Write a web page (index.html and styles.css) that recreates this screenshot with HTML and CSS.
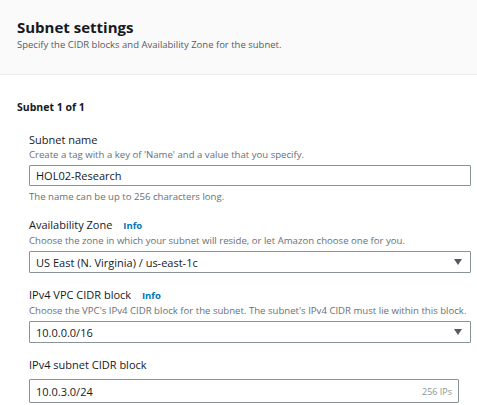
FILE: index.html
```html
<!DOCTYPE html>
<html>
<head>
<meta charset="utf-8">
<link rel="stylesheet" href="styles.css">
</head>
<body>
<div class="panel">
  <div class="header">
    <h2 class="title">Subnet settings</h2>
    <p class="subtitle">Specify the CIDR blocks and Availability Zone for the subnet.</p>
  </div>
  <div class="body">
    <h3 class="subnet-title">Subnet 1 of 1</h3>
    <div class="fields">
      <div class="field">
        <div class="label">Subnet name</div>
        <div class="desc">Create a tag with a key of 'Name' and a value that you specify.</div>
        <div class="input">HOL02-Research</div>
        <div class="hint">The name can be up to 256 characters long.</div>
      </div>
      <div class="field">
        <div class="label">Availability Zone <span class="info">Info</span></div>
        <div class="desc">Choose the zone in which your subnet will reside, or let Amazon choose one for you.</div>
        <div class="input select">US East (N. Virginia) / us-east-1c<span class="caret"></span></div>
      </div>
      <div class="field">
        <div class="label">IPv4 VPC CIDR block <span class="info">Info</span></div>
        <div class="desc">Choose the VPC's IPv4 CIDR block for the subnet. The subnet's IPv4 CIDR must lie within this block.</div>
        <div class="input select">10.0.0.0/16<span class="caret"></span></div>
      </div>
      <div class="field">
        <div class="label">IPv4 subnet CIDR block</div>
        <div class="input short">10.0.3.0/24<span class="ips">256 IPs</span></div>
        <div class="below"></div>
      </div>
    </div>
  </div>
</div>
</body>
</html>
```
FILE: styles.css
```css
html, body {
  margin: 0;
  padding: 0;
  background: #ffffff;
  font-family: "Open Sans", "Noto Sans", sans-serif;
  color: #16191f;
}
.panel {
  width: 477px;
  overflow: hidden;
}
.header {
  background: #fafafa;
  border-bottom: 1px solid #eaeded;
  height: 75px;
  box-sizing: border-box;
  padding: 18px 17px 0 17px;
}
.title {
  margin: 0;
  font-size: 15px;
  line-height: 19px;
  font-weight: 700;
  color: #16191f;
}
.subtitle {
  margin: 1px 0 0 0;
  font-size: 9.5px;
  line-height: 14px;
  color: #545b64;
}
.body {
  padding: 25px 0 0 17px;
}
.subnet-title {
  margin: 0;
  font-size: 10.5px;
  line-height: 14px;
  font-weight: 700;
}
.fields {
  padding: 18px 6px 0 12px;
  display: flex;
  flex-direction: column;
  gap: 14px;
}
.field {
  display: flex;
  flex-direction: column;
}
.label {
  font-size: 11px;
  line-height: 15px;
  color: #16191f;
}
.info {
  color: #0073bb;
  font-weight: 700;
  font-size: 9.5px;
  margin-left: 8px;
}
.desc {
  font-size: 9.6px;
  line-height: 15px;
  color: #687078;
}
.input {
  margin-top: 3px;
  height: 21px;
  box-sizing: border-box;
  border: 1px solid #879596;
  border-radius: 1px;
  padding: 0 6px;
  font-size: 11px;
  line-height: 19px;
  color: #16191f;
  display: flex;
  align-items: center;
  justify-content: space-between;
}
.select {
  height: 22px;
}
.caret {
  width: 0;
  height: 0;
  border-left: 4.5px solid transparent;
  border-right: 4.5px solid transparent;
  border-top: 6px solid #545b64;
  margin-right: 2px;
}
.short {
  width: 430px;
  height: 24px;
  margin-top: 7px;
}
.ips {
  font-size: 9px;
  color: #879596;
}
.hint {
  margin-top: 5px;
  font-size: 9.6px;
  line-height: 12px;
  color: #687078;
}
.below {
  margin-top: 2px;
  width: 320px;
  height: 6px;
  background: #eaeded;
}
```
